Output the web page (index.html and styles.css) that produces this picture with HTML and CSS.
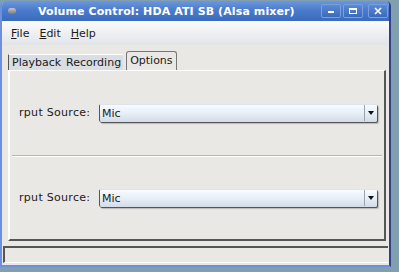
FILE: index.html
```html
<!DOCTYPE html>
<html lang="en">
<head>
    <meta charset="UTF-8">
    <title>Volume Control: HDA ATI SB (Alsa mixer)</title>
    <link rel="stylesheet" href="styles.css">
</head>
<body>
    <div class="window">
        <div class="titlebar">
            <span class="title-icon"></span>
            <span class="title">Volume Control: HDA ATI SB (Alsa mixer)</span>
            <div class="wm-buttons">
                <span class="wm-btn"><svg width="10" height="8" viewBox="0 0 10 8"><rect x="2" y="4" width="6" height="2" fill="#fff"/></svg></span>
                <span class="wm-btn"><svg width="10" height="8" viewBox="0 0 10 8"><rect x="1.5" y="1.5" width="7" height="5" fill="none" stroke="#fff" stroke-width="1"/><rect x="1" y="1" width="8" height="2" fill="#fff"/></svg></span>
                <span class="wm-btn close"><svg width="10" height="8" viewBox="0 0 10 8"><path d="M2 1 L8 7 M8 1 L2 7" stroke="#fff" stroke-width="1.6"/></svg></span>
            </div>
        </div>

        <nav class="menubar">
            <span><u>F</u>ile</span>
            <span><u>E</u>dit</span>
            <span><u>H</u>elp</span>
        </nav>

        <div class="content">
            <div class="tabs">
                <span class="tab">Playback</span>
                <span class="tab">Recording</span>
                <span class="tab active">Options</span>
            </div>
            <div class="panel">
                <div class="row">
                    <span class="label">rput Source:</span>
                    <div class="combo">
                        <span class="combo-text">Mic</span>
                        <span class="combo-arrow"></span>
                    </div>
                </div>
                <div class="separator"></div>
                <div class="row">
                    <span class="label">rput Source:</span>
                    <div class="combo">
                        <span class="combo-text">Mic</span>
                        <span class="combo-arrow"></span>
                    </div>
                </div>
            </div>
            <div class="statusbar"></div>
        </div>
    </div>
</body>
</html>
```

FILE: styles.css
```css
* {
    box-sizing: border-box;
}
body {
    margin: 0;
    background-color: #80a0b0;
    font-family: "DejaVu Sans", Verdana, sans-serif;
    font-size: 11px;
    color: #1a1a1a;
}
.window {
    width: 391px;
    height: 266px;
    margin-top: 1px;
    border-left: 2px solid #6d8fe0;
    border-right: 2px solid #30418a;
    border-bottom: 2px solid #6d8fe0;
    border-radius: 5px 5px 0 0;
    background-color: #eae8e5;
    display: flex;
    flex-direction: column;
    overflow: hidden;
}
.titlebar {
    height: 20px;
    flex-shrink: 0;
    display: flex;
    align-items: center;
    background: linear-gradient(#6d97dc, #4a7bcc 45%, #3a6bbd);
    color: #fff;
}
.title-icon {
    width: 8px;
    height: 6px;
    margin-left: 6px;
    border-radius: 3px;
    background: linear-gradient(#c8c8c8, #7a7a7a);
}
.title {
    margin-left: 22px;
    font-weight: bold;
    font-size: 11px;
    letter-spacing: 0.1px;
}
.wm-buttons {
    margin-left: auto;
    margin-right: 1px;
    display: flex;
    gap: 2px;
}
.wm-btn {
    width: 20px;
    height: 14px;
    border: 1px solid #7aa0e0;
    border-radius: 2px;
    display: flex;
    align-items: center;
    justify-content: center;
    background: linear-gradient(#5a89d6, #3a6abb);
}
.wm-btn.close {
    margin-left: 3px;
}
.menubar {
    height: 24px;
    flex-shrink: 0;
    display: flex;
    align-items: center;
    gap: 10px;
    padding-left: 9px;
    background: linear-gradient(#fbfbfc, #e2e4e8);
}
.content {
    flex: 1;
    display: flex;
    flex-direction: column;
    padding: 6px 0 0 1px;
}
.tabs {
    display: flex;
    align-items: flex-end;
    padding-left: 5px;
    height: 19px;
}
.tab {
    height: 16px;
    line-height: 16px;
    padding: 0 2px 0 3px;
    background: #dadde2;
    border-top: 1px solid #fff;
}
.tab:first-child {
    border-left: 1px solid #555;
}
.tab.active {
    height: 19px;
    line-height: 18px;
    background: #eae8e5;
    border: 1px solid #777;
    border-bottom: none;
    border-radius: 3px 3px 0 0;
    padding: 0 3px;
    margin-left: 3px;
}
.panel {
    height: 171px;
    margin-left: 5px;
    width: 378px;
    border-top: 1px solid #fff;
    border-left: 2px solid #fff;
    border-right: 2px solid #555;
    border-bottom: 2px solid #555;
    padding: 0 7px 0 9px;
    display: flex;
    flex-direction: column;
}
.row {
    height: 84px;
    display: flex;
    align-items: center;
    gap: 6px;
}
.row:first-child {
    height: 86px;
}
.label {
    width: 74px;
    white-space: nowrap;
    letter-spacing: 0.3px;
}
.combo {
    flex: 1;
    height: 18px;
    display: flex;
    align-items: center;
    background: linear-gradient(#f8fbff, #e6eef8 50%, #d3dbe6);
    border-left: 1px solid #555;
    border-top: 1px solid #dde3ea;
    box-shadow: 1px 1px 0 #555, 2px 2px 1px #b8b8b8;
    border-radius: 2px;
}
.combo-text {
    flex: 1;
    padding-left: 2px;
}
.combo-arrow {
    width: 13px;
    height: 16px;
    border-left: 1px solid #9aa4b0;
    display: flex;
    align-items: center;
    justify-content: center;
}
.combo-arrow::after {
    content: "";
    border-left: 3.5px solid transparent;
    border-right: 3.5px solid transparent;
    border-top: 4px solid #111;
}
.separator {
    height: 2px;
    border-top: 1px solid #b8b6b2;
    border-bottom: 1px solid #fff;
    margin: 0 -5px 0 -7px;
}
.statusbar {
    height: 17px;
    margin-top: 5px;
    margin-right: 1px;
    border-top: 2px solid #555;
    border-left: 2px solid #555;
    border-bottom: 1px solid #fff;
}
```
